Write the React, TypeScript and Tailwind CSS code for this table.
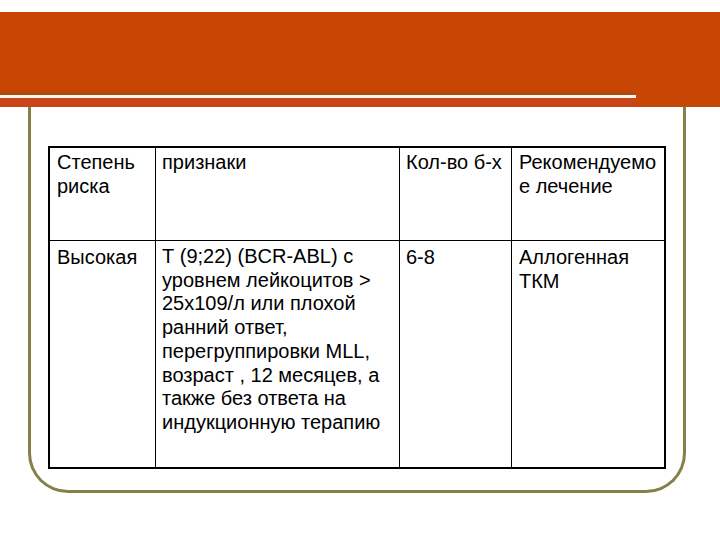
import React from "react";

const font = { fontFamily: '"Liberation Sans", Arial, sans-serif' };

export default function App() {
  return (
    <div className="w-[720px] h-[540px] bg-white overflow-hidden" style={font}>
      <div className="mt-[12px] flex flex-col">
        <div className="h-[80px] bg-[#c84604]" />
        <div className="h-[3px] flex">
          <div className="w-[636px] bg-[#ad4a10]" />
          <div className="flex-1 bg-[#c84604]" />
        </div>
        <div className="h-[3px] flex">
          <div className="w-[636px] bg-[#fff8e8]" />
          <div className="flex-1 bg-[#c84604]" />
        </div>
        <div className="h-[9px] flex">
          <div className="w-[636px] bg-[#c9441a]" />
          <div className="flex-1 bg-[#c84604]" />
        </div>
      </div>
      <div className="ml-[28px] w-[658px] h-[386px] border-x-[3px] border-b-[3px] border-[#857f4a] rounded-b-[40px] pl-[17px] pt-[39px]">
        <div className="w-[618px] h-[323px] border-2 border-black grid grid-cols-[105px_244px_112px_153px] grid-rows-[92px_227px] text-[20px] leading-[24px] text-black whitespace-nowrap">
          <div className="pl-[7px] pt-[2px]">Степень<br />риска</div>
          <div className="border-l border-black pl-[6px] pt-[2px]">признаки</div>
          <div className="border-l border-black pl-[6px] pt-[2px]">Кол-во б-х</div>
          <div className="border-l border-black pl-[7px] pt-[2px]">Рекомендуемо<br />е лечение</div>
          <div className="border-t border-black pl-[7px] pt-[4px]">Высокая</div>
          <div className="border-t border-l border-black pl-[6px] pt-[4px] leading-[23.7px]">
            Т (9;22) (BCR-ABL) с<br />
            уровнем лейкоцитов &gt;<br />
            25х109/л или плохой<br />
            ранний ответ,<br />
            перегруппировки MLL,<br />
            возраст , 12 месяцев, а<br />
            также без ответа на<br />
            индукционную терапию
          </div>
          <div className="border-t border-l border-black pl-[6px] pt-[4px]">6-8</div>
          <div className="border-t border-l border-black pl-[7px] pt-[4px]">Аллогенная<br />ТКМ</div>
        </div>
      </div>
    </div>
  );
}
